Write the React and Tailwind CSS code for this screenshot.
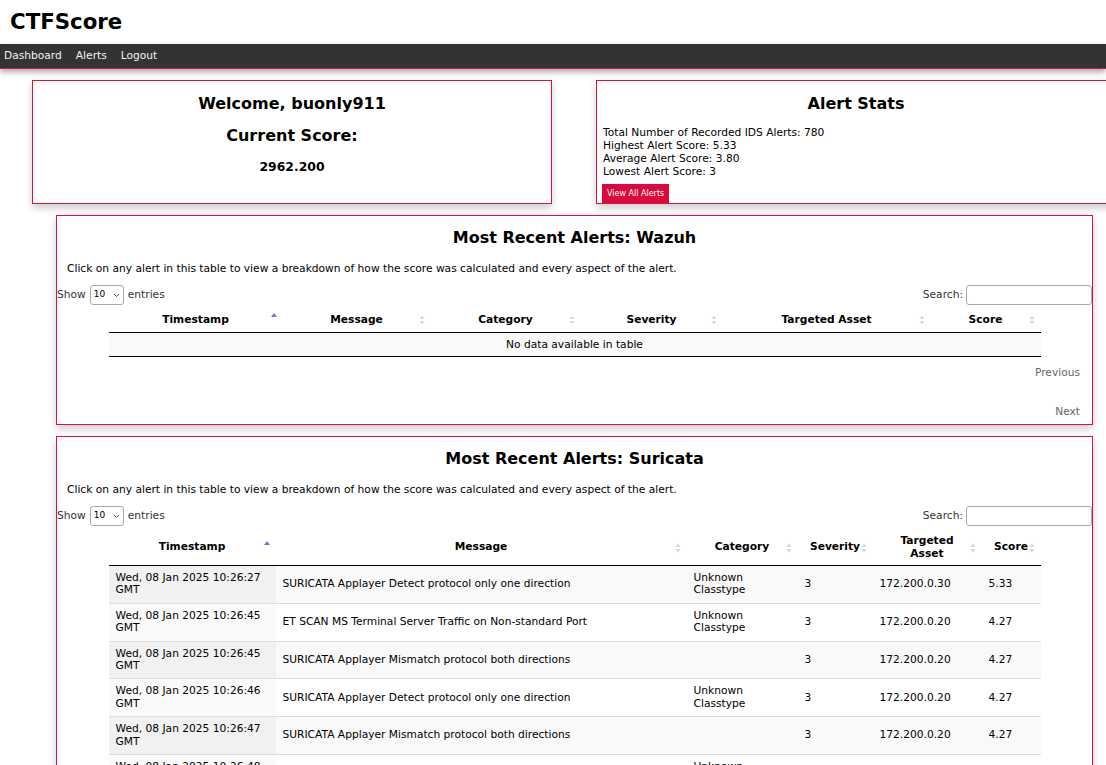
import React from "react";

const font = { fontFamily: '"DejaVu Sans", Verdana, sans-serif' };

const suricataRows = [
    { ts: "Wed, 08 Jan 2025 10:26:27 GMT", msg: "SURICATA Applayer Detect protocol only one direction", cat: "Unknown Classtype", sev: "3", asset: "172.200.0.30", score: "5.33" },
    { ts: "Wed, 08 Jan 2025 10:26:45 GMT", msg: "ET SCAN MS Terminal Server Traffic on Non-standard Port", cat: "Unknown Classtype", sev: "3", asset: "172.200.0.20", score: "4.27" },
    { ts: "Wed, 08 Jan 2025 10:26:45 GMT", msg: "SURICATA Applayer Mismatch protocol both directions", cat: "", sev: "3", asset: "172.200.0.20", score: "4.27" },
    { ts: "Wed, 08 Jan 2025 10:26:46 GMT", msg: "SURICATA Applayer Detect protocol only one direction", cat: "Unknown Classtype", sev: "3", asset: "172.200.0.20", score: "4.27" },
    { ts: "Wed, 08 Jan 2025 10:26:47 GMT", msg: "SURICATA Applayer Mismatch protocol both directions", cat: "", sev: "3", asset: "172.200.0.20", score: "4.27" },
    { ts: "Wed, 08 Jan 2025 10:26:48 GMT", msg: "SURICATA Applayer Detect protocol only one direction", cat: "Unknown Classtype", sev: "3", asset: "172.200.0.20", score: "4.27" },
    { ts: "Wed, 08 Jan 2025 10:26:48 GMT", msg: "SURICATA Applayer Mismatch protocol both directions", cat: "", sev: "3", asset: "172.200.0.20", score: "4.27" },
    { ts: "Wed, 08 Jan 2025 10:26:49 GMT", msg: "SURICATA Applayer Detect protocol only one direction", cat: "Unknown Classtype", sev: "3", asset: "172.200.0.20", score: "4.27" },
    { ts: "Wed, 08 Jan 2025 10:26:50 GMT", msg: "SURICATA Applayer Mismatch protocol both directions", cat: "", sev: "3", asset: "172.200.0.20", score: "4.27" },
    { ts: "Wed, 08 Jan 2025 10:26:51 GMT", msg: "SURICATA Applayer Detect protocol only one direction", cat: "Unknown Classtype", sev: "3", asset: "172.200.0.20", score: "4.27" },
];

function SortIcon({ active }) {
    if (active) {
        return (
            <svg width="6" height="10" viewBox="0 0 6 10" className="absolute right-[6px] top-1/2 -translate-y-1/2 -mt-[3px]">
                <path d="M3 1 L6 5 L0 5 Z" fill="#7474d6" />
            </svg>
        );
    }
    return (
        <svg width="6" height="10" viewBox="0 0 6 10" className="absolute right-[6px] top-1/2 -translate-y-1/2">
            <path d="M3 0.5 L5.5 4 L0.5 4 Z" fill="#d8d8d8" />
            <path d="M3 9.5 L5.5 6 L0.5 6 Z" fill="#d8d8d8" />
        </svg>
    );
}

function Th({ children, active, className }) {
    return (
        <th className={`relative border-b border-black px-[10px] py-[5px] text-center align-middle text-[10.67px] font-bold leading-[12.5px] ${className}`}>
            {children}
            <SortIcon active={active} />
        </th>
    );
}

function TableControls() {
    return (
        <div className="flex items-center justify-between text-[10.67px] text-[#333]">
            <div className="flex items-center gap-[4px]">
                <span>Show</span>
                <div className="flex h-[20px] w-[34px] items-center justify-between rounded-[3px] border border-[#aaa] bg-white px-[3px] text-[9px] text-black">
                    <span>10</span>
                    <svg width="7" height="5" viewBox="0 0 7 5">
                        <path d="M1 1 L3.5 3.5 L6 1" stroke="#444" strokeWidth="1" fill="none" />
                    </svg>
                </div>
                <span>entries</span>
            </div>
            <div className="flex items-center gap-[3px]">
                <span>Search:</span>
                <div className="h-[20px] w-[126px] rounded-[3px] border border-[#aaa] bg-white"></div>
            </div>
        </div>
    );
}

function CardHeader({ title }) {
    return (
        <>
            <h2 className="text-center text-[16px] font-bold leading-[22px]">{title}</h2>
            <p className="mt-[13px] px-[10px] text-[10.67px] leading-[13px]">
                Click on any alert in this table to view a breakdown of how the score was calculated and every aspect of the alert.
            </p>
            <div className="mt-[10px]">
                <TableControls />
            </div>
        </>
    );
}

export default function App() {
    return (
        <div className="min-h-screen overflow-hidden bg-white text-black" style={font}>
            <header className="flex h-[44px] items-center px-[10px]">
                <h1 className="text-[21.3px] font-bold leading-none">CTFScore</h1>
            </header>

            <nav className="flex h-[25px] items-center gap-[14px] border-b border-[#dc143c] bg-[#333] pl-[4px] text-[10.67px] text-[#f2f2f2] shadow-[0_3px_6px_rgba(0,0,0,0.35)]">
                <span>Dashboard</span>
                <span>Alerts</span>
                <span>Logout</span>
            </nav>

            <div className="mt-[11px] flex gap-[44px] pl-[32px]">
                <div className="h-[124px] w-[520px] shrink-0 border border-[#dc143c] pt-[12px] text-center shadow-[0_4px_8px_rgba(0,0,0,0.2)]">
                    <h2 className="text-[16px] font-bold leading-[22px]">Welcome, buonly911</h2>
                    <h2 className="mt-[10px] text-[16px] font-bold leading-[22px]">Current Score:</h2>
                    <p className="mt-[12px] text-[12.4px] font-bold leading-[16px]">2962.200</p>
                </div>

                <div className="h-[124px] w-[520px] shrink-0 border border-[#dc143c] px-[5px] pt-[12px] shadow-[0_4px_8px_rgba(0,0,0,0.2)]">
                    <h2 className="text-center text-[16px] font-bold leading-[22px]">Alert Stats</h2>
                    <div className="mt-[11px] pl-[1px] text-[10.67px] leading-[13px]">
                        <p>Total Number of Recorded IDS Alerts: 780</p>
                        <p>Highest Alert Score: 5.33</p>
                        <p>Average Alert Score: 3.80</p>
                        <p>Lowest Alert Score: 3</p>
                    </div>
                    <button className="mt-[6px] h-[19px] bg-[#dc0a3c] px-[5px] text-[8px] text-white">
                        View All Alerts
                    </button>
                </div>
            </div>

            <section className="ml-[56px] mt-[11px] h-[210px] w-[1037px] border border-[#dc143c] pt-[11px] shadow-[0_4px_8px_rgba(0,0,0,0.2)]">
                <CardHeader title="Most Recent Alerts: Wazuh" />
                <table className="mx-auto mt-[4px] w-[932px] table-fixed border-collapse">
                    <thead>
                        <tr>
                            <Th active className="w-[174px]">Timestamp</Th>
                            <Th className="w-[148px]">Message</Th>
                            <Th className="w-[150px]">Category</Th>
                            <Th className="w-[142px]">Severity</Th>
                            <Th className="w-[208px]">Targeted Asset</Th>
                            <Th className="w-[110px]">Score</Th>
                        </tr>
                    </thead>
                    <tbody>
                        <tr className="bg-[#f9f9f9]">
                            <td colSpan={6} className="border-b border-black py-[5px] text-center text-[10.67px] leading-[13px]">
                                No data available in table
                            </td>
                        </tr>
                    </tbody>
                </table>
                <div className="flex flex-col items-end pr-[12px] pt-[9px] text-[10.67px] leading-[13px] text-[#666]">
                    <span>Previous</span>
                    <span className="mt-[26px]">Next</span>
                </div>
            </section>

            <section className="mb-[20px] ml-[56px] mt-[11px] w-[1037px] border border-[#dc143c] pb-[20px] pt-[11px] shadow-[0_4px_8px_rgba(0,0,0,0.2)]">
                <CardHeader title="Most Recent Alerts: Suricata" />
                <table className="mx-auto mt-[4px] w-[932px] table-fixed border-collapse">
                    <thead>
                        <tr>
                            <Th active className="w-[167px]">Timestamp</Th>
                            <Th className="w-[411px]">Message</Th>
                            <Th className="w-[111px]">Category</Th>
                            <Th className="w-[75px] !px-[4px]">Severity</Th>
                            <Th className="w-[109px]">Targeted<br />Asset</Th>
                            <Th className="w-[59px] !px-[4px]">Score</Th>
                        </tr>
                    </thead>
                    <tbody>
                        {suricataRows.map((row, i) => {
                            const odd = i % 2 === 0;
                            const rowBg = odd ? "bg-[#f9f9f9]" : "bg-white";
                            const sortBg = odd ? "bg-[#f1f1f1]" : "bg-[#fafafa]";
                            return (
                                <tr key={i} className={`${rowBg} border-t border-[#ddd] text-[10.67px] leading-[12.4px]`}>
                                    <td className={`${sortBg} px-[7px] py-[6px]`}>{row.ts}</td>
                                    <td className="px-[7px] py-[6px]">{row.msg}</td>
                                    <td className="px-[7px] py-[6px]">{row.cat}</td>
                                    <td className="px-[7px] py-[6px]">{row.sev}</td>
                                    <td className="px-[7px] py-[6px]">{row.asset}</td>
                                    <td className="px-[7px] py-[6px]">{row.score}</td>
                                </tr>
                            );
                        })}
                    </tbody>
                </table>
            </section>
        </div>
    );
}
